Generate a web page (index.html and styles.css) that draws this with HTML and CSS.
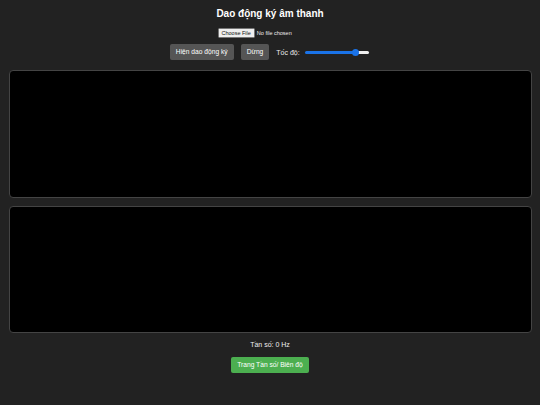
FILE: index.html
```html
<!DOCTYPE html>
<html lang="vi">
<head>
<meta charset="utf-8">
<title>Dao động ký âm thanh</title>
<link rel="stylesheet" href="styles.css">
</head>
<body>
<h1 class="title">Dao động ký âm thanh</h1>
<div class="file-row"><input type="file" class="file-input" accept="audio/*"></div>
<div class="controls">
  <button class="btn">Hiện dao động ký</button>
  <button class="btn">Dừng</button>
  <label class="speed-label" for="speed">Tốc độ:</label>
  <input type="range" id="speed" class="speed" min="0" max="100" value="83">
</div>
<div class="scope"></div>
<div class="scope"></div>
<p class="freq">Tần số: 0 Hz</p>
<div class="bottom-row"><button class="btn btn-green">Trang Tần số/ Biên độ</button></div>
</body>
</html>
```

FILE: styles.css
```css
html {
  background: #222;
}
body {
  margin: 0;
  padding: 8px 8px 0;
  background: #222;
  color: #eee;
  font-family: "Liberation Sans", Arial, sans-serif;
  font-size: 8px;
  text-align: center;
}
.title {
  margin: 0;
  font-size: 10px;
  line-height: 11.5px;
  font-weight: bold;
  color: #fff;
}
.file-row {
  margin-top: 8.5px;
  display: flex;
  justify-content: center;
  align-items: center;
}
.file-input {
  color: #eee;
  font-size: 5.5px;
  line-height: 8.5px;
  font-family: "Liberation Sans", Arial, sans-serif;
}
.file-input::file-selector-button {
  font-family: "Liberation Sans", Arial, sans-serif;
  font-size: 5.5px;
  line-height: 6px;
  padding: 1px 3px;
  margin-right: 2px;
  color: #111;
  background: #efefef;
  border: 1px solid #767676;
  border-radius: 1.5px;
}
.controls {
  margin-top: 6px;
  padding-right: 4px;
  display: flex;
  justify-content: center;
  align-items: center;
}
.btn {
  background: #555;
  color: #fff;
  border: none;
  border-radius: 2px;
  padding: 4px 6px;
  font-family: "Liberation Sans", Arial, sans-serif;
  font-size: 6.667px;
  line-height: 8px;
  margin: 0 3.5px;
}
.speed-label {
  font-size: 7px;
  margin: 0 4px 0 3.5px;
}
.speed {
  -webkit-appearance: none;
  appearance: none;
  width: 64px;
  height: 8px;
  margin: 0 1px;
  background: transparent;
}
.speed::-webkit-slider-runnable-track {
  height: 3px;
  border-radius: 1.5px;
  background: linear-gradient(to right, #1a73e8 51px, #efefef 51px);
}
.speed::-webkit-slider-thumb {
  -webkit-appearance: none;
  appearance: none;
  width: 7px;
  height: 7px;
  margin-top: -2px;
  border-radius: 50%;
  background: #1a73e8;
  border: none;
}
.scope {
  height: 125.5px;
  margin: 10px 0.5px 0;
  background: #000;
  border: 1px solid #444;
  border-radius: 4px;
}
.scope + .scope {
  margin-top: 8px;
}
.freq {
  margin: 8px 0 0;
  font-size: 7px;
  line-height: 8px;
}
.bottom-row {
  margin-top: 7.5px;
}
.btn-green {
  background: #4caf50;
  margin: 0;
}
```
